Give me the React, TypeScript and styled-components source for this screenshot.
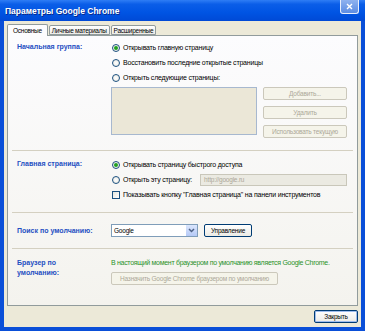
import styled, { createGlobalStyle } from 'styled-components';

const GlobalStyle = createGlobalStyle`
  html, body {
    margin: 0;
    padding: 0;
    background: #ffffff;
  }
  body {
    font-family: 'Liberation Sans', Arial, sans-serif;
    font-size: 7px;
    letter-spacing: -0.2px;
    color: #000000;
  }
`;

const Window = styled.div`
  width: 365px;
  height: 331px;
  display: flex;
  flex-direction: column;
  background: #0a4fd8;
  overflow: hidden;
`;

const TitleBar = styled.div`
  height: 21px;
  flex-shrink: 0;
  display: flex;
  align-items: center;
  justify-content: space-between;
  padding: 0 6px 0 5px;
  background: linear-gradient(to bottom, #2f7df5 0%, #0b5ee8 20%, #0054e3 60%, #0049d6 100%);
`;

const Title = styled.div`
  color: #ffffff;
  font-weight: bold;
  font-size: 8.5px;
  letter-spacing: 0;
  text-shadow: 1px 1px 0 #0a2a8a;
`;

const CloseBox = styled.div`
  width: 17px;
  height: 13px;
  margin-top: -8px;
  border: 1px solid #e8eefc;
  border-top: none;
  border-radius: 0 0 3px 3px;
  background: linear-gradient(to bottom, #8fb2ef, #5c8ce3);
  display: flex;
  align-items: center;
  justify-content: center;
`;

const Body = styled.div`
  flex: 1;
  display: flex;
  flex-direction: column;
  margin: 0 4px 4px 4px;
  padding: 2px 3px 0 3px;
  background: #ece9d8;
`;

const TabRow = styled.div`
  display: flex;
  align-items: flex-end;
  height: 12px;
  position: relative;
  z-index: 1;
`;

const Tab = styled.div<{ $active?: boolean }>`
  height: ${({ $active }) => ($active ? '12px' : '10px')};
  margin-bottom: ${({ $active }) => ($active ? '-1px' : '0')};
  padding: 0 ${({ $active }) => ($active ? '5px' : '2px')};
  margin-right: 1px;
  box-sizing: border-box;
  display: flex;
  align-items: center;
  border: 1px solid #919b9c;
  border-bottom: ${({ $active }) => ($active ? 'none' : '1px solid #919b9c')};
  border-radius: 2px 2px 0 0;
  background: ${({ $active }) =>
    $active ? '#fcfcfe' : 'linear-gradient(to bottom, #ffffff, #ecebe6)'};
  font-size: 6.5px;
  letter-spacing: -0.25px;
  white-space: nowrap;
`;

const Panel = styled.div`
  height: 271px;
  flex-shrink: 0;
  box-sizing: border-box;
  border: 1px solid #919b9c;
  padding: 0 4px;
  background: linear-gradient(to bottom, #fcfcfe, #f4f3ee);
  display: flex;
  flex-direction: column;
`;

const Section = styled.div<{ $pt: number; $pb: number }>`
  display: grid;
  grid-template-columns: 94px 1fr;
  padding: ${({ $pt, $pb }) => `${$pt}px 0 ${$pb}px 5px`};
`;

const Label = styled.div`
  color: #1f4fc2;
  font-weight: bold;
  font-size: 7px;
  letter-spacing: 0;
  line-height: 10px;
  padding-top: 2px;
`;

const Controls = styled.div`
  display: flex;
  flex-direction: column;
`;

const Option = styled.div`
  height: 15px;
  display: flex;
  align-items: center;
  gap: 3px;
  padding-left: 1px;
  white-space: nowrap;
`;

const Radio = styled.span<{ $checked?: boolean }>`
  width: 8px;
  height: 8px;
  box-sizing: border-box;
  border: 1px solid #1c5180;
  border-radius: 50%;
  background: radial-gradient(circle at 50% 50%, #ffffff 0%, #e6e6de 100%);
  display: flex;
  align-items: center;
  justify-content: center;
  flex-shrink: 0;
  &::after {
    content: '';
    width: 4px;
    height: 4px;
    border-radius: 50%;
    background: #21a121;
    display: ${({ $checked }) => ($checked ? 'block' : 'none')};
  }
`;

const Check = styled.span`
  width: 8px;
  height: 8px;
  box-sizing: border-box;
  border: 1px solid #1c5180;
  background: linear-gradient(135deg, #e6e6de, #ffffff);
  flex-shrink: 0;
`;

const PagesRow = styled.div`
  display: flex;
  gap: 6px;
  margin-top: 2px;
`;

const PagesList = styled.div`
  width: 146px;
  height: 48px;
  box-sizing: border-box;
  border: 1px solid #a7b8cf;
  background: #ebe7d7;
`;

const ButtonStack = styled.div`
  display: flex;
  flex-direction: column;
  gap: 6px;
`;

const Button = styled.div<{ $width: number; $disabled?: boolean; $default?: boolean }>`
  width: ${({ $width }) => $width}px;
  height: 13px;
  box-sizing: border-box;
  display: flex;
  align-items: center;
  justify-content: center;
  border: 1px solid ${({ $disabled }) => ($disabled ? '#cbc8bb' : '#003c74')};
  border-radius: 2px;
  background: ${({ $disabled }) =>
    $disabled ? '#f5f4ea' : 'linear-gradient(to bottom, #ffffff, #ecebe5)'};
  color: ${({ $disabled }) => ($disabled ? '#aca899' : '#000000')};
  box-shadow: ${({ $default }) => ($default ? 'inset 0 0 0 1px #9fbdee' : 'none')};
  font-size: 6.5px;
  white-space: nowrap;
`;

const UrlField = styled.div`
  width: 147px;
  height: 12px;
  box-sizing: border-box;
  margin-left: 5px;
  border: 1px solid #c9c7ba;
  background: #ebeae2;
  color: #aca899;
  font-size: 6.5px;
  display: flex;
  align-items: center;
  padding-left: 3px;
`;

const Divider = styled.div`
  height: 1px;
  background: #d4d0c1;
  flex-shrink: 0;
`;

const InlineRow = styled.div`
  display: flex;
  align-items: center;
  gap: 6px;
`;

const Select = styled.div`
  width: 87px;
  height: 13px;
  box-sizing: border-box;
  border: 1px solid #7f9db9;
  background: #ffffff;
  display: flex;
  align-items: center;
  justify-content: space-between;
  padding-left: 2px;
  font-size: 6.5px;
`;

const DropButton = styled.div`
  width: 11px;
  height: 11px;
  background: linear-gradient(to bottom, #dbe6fd, #b5c9f6);
  border-left: 1px solid #ffffff;
  display: flex;
  align-items: center;
  justify-content: center;
`;

const StatusText = styled.div`
  color: #2a922a;
  line-height: 12px;
  padding-top: 1px;
  letter-spacing: -0.3px;
  white-space: nowrap;
`;

const ActionRow = styled.div`
  margin-top: 3px;
`;

const Footer = styled.div`
  flex: 1;
  display: flex;
  justify-content: flex-end;
  align-items: center;
`;

const App = () => (
  <>
    <GlobalStyle />
    <Window>
      <TitleBar>
        <Title>Параметры Google Chrome</Title>
        <CloseBox>
          <svg width="7" height="7" viewBox="0 0 7 7">
            <path d="M1 1 L6 6 M6 1 L1 6" stroke="#ffffff" strokeWidth="1.4" />
          </svg>
        </CloseBox>
      </TitleBar>
      <Body>
        <TabRow>
          <Tab $active>Основные</Tab>
          <Tab>Личные материалы</Tab>
          <Tab>Расширенные</Tab>
        </TabRow>
        <Panel>
          <Section $pt={4} $pb={12}>
            <Label>Начальная группа:</Label>
            <Controls>
              <Option>
                <Radio $checked />
                Открывать главную страницу
              </Option>
              <Option>
                <Radio />
                Восстановить последние открытые страницы
              </Option>
              <Option>
                <Radio />
                Открыть следующие страницы:
              </Option>
              <PagesRow>
                <PagesList />
                <ButtonStack>
                  <Button $width={84} $disabled>Добавить...</Button>
                  <Button $width={84} $disabled>Удалить</Button>
                  <Button $width={84} $disabled>Использовать текущую</Button>
                </ButtonStack>
              </PagesRow>
            </Controls>
          </Section>
          <Divider />
          <Section $pt={6} $pb={10}>
            <Label>Главная страница:</Label>
            <Controls>
              <Option>
                <Radio $checked />
                Открывать страницу быстрого доступа
              </Option>
              <Option>
                <Radio />
                Открыть эту страницу:
                <UrlField>http://google.ru</UrlField>
              </Option>
              <Option>
                <Check />
                Показывать кнопку "Главная страница" на панели инструментов
              </Option>
            </Controls>
          </Section>
          <Divider />
          <Section $pt={11} $pb={11}>
            <Label>Поиск по умолчанию:</Label>
            <InlineRow>
              <Select>
                Google
                <DropButton>
                  <svg width="7" height="5" viewBox="0 0 7 5">
                    <path d="M1 1 L3.5 3.5 L6 1" stroke="#4d6185" strokeWidth="1.5" fill="none" />
                  </svg>
                </DropButton>
              </Select>
              <Button $width={48}>Управление</Button>
            </InlineRow>
          </Section>
          <Divider />
          <Section $pt={7} $pb={0}>
            <Label>
              Браузер по
              <br />
              умолчанию:
            </Label>
            <Controls>
              <StatusText>
                В настоящий момент браузером по умолчанию является Google Chrome.
              </StatusText>
              <ActionRow>
                <Button $width={167} $disabled>
                  Назначить Google Chrome браузером по умолчанию
                </Button>
              </ActionRow>
            </Controls>
          </Section>
        </Panel>
        <Footer>
          <Button $width={44} $default>Закрыть</Button>
        </Footer>
      </Body>
    </Window>
  </>
);

export default App;
